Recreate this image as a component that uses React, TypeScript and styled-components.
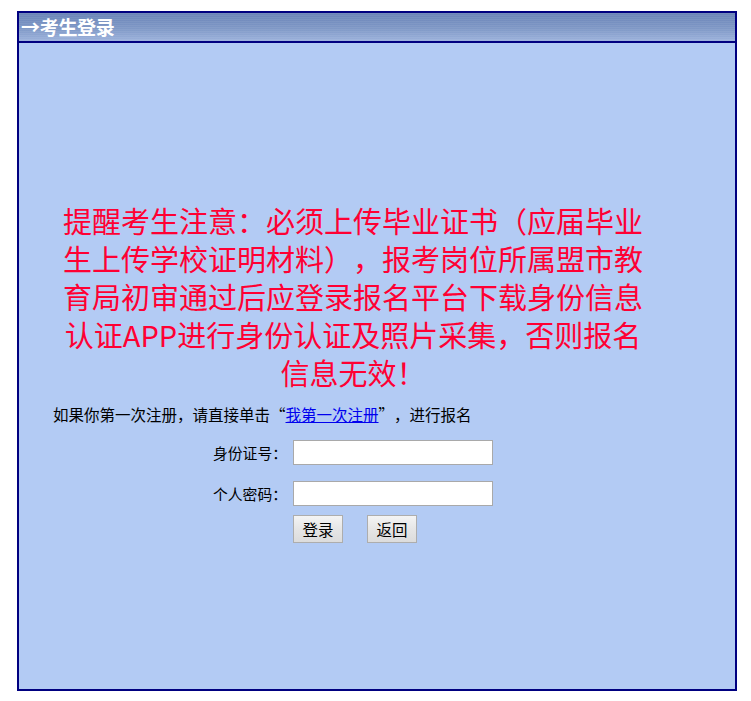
import React from 'react';
import styled, { createGlobalStyle } from 'styled-components';

const GlobalStyle = createGlobalStyle`
  body {
    margin: 0;
    background: #fff;
    font-family: "Noto Sans CJK SC", "Noto Sans", sans-serif;
    text-spacing-trim: space-all;
  }
`;

const Page = styled.div`
  padding: 11px 0 0 17px;
`;

const Panel = styled.div`
  display: flex;
  flex-direction: column;
  width: 716px;
  height: 676px;
  border: 2px solid #000080;
  background: #b3cbf4;
`;

const Header = styled.div`
  display: flex;
  align-items: center;
  height: 28px;
  padding: 0 2px;
  border-bottom: 2px solid #000080;
  background:
    repeating-linear-gradient(180deg, rgba(255, 255, 255, 0.06) 0 1px, rgba(0, 0, 0, 0) 1px 2px),
    linear-gradient(180deg, #6a84b7 0%, #7f98c6 55%, #9cb2dc 100%);
  color: #fff;
  font-size: 19px;
  font-weight: 700;
  line-height: 28px;
  letter-spacing: -0.3px;
`;

const Body = styled.div`
  flex: 1;
  padding: 158px 0 0;
`;

const Notice = styled.p`
  width: 600px;
  margin: 0 0 0 34px;
  color: #ff0033;
  font-size: 29px;
  line-height: 38px;
  text-align: center;
`;

const Hint = styled.p`
  margin: 13px 0 0 34px;
  color: #000;
  font-size: 15.5px;
  line-height: 20px;
  font-feature-settings: "fwid";
`;

const Link = styled.a`
  color: #0000ee;
  text-decoration: underline;
`;

const Form = styled.div`
  display: grid;
  grid-template-columns: 268px 200px;
  column-gap: 6px;
  row-gap: 16px;
  margin-top: 16px;
`;

const Label = styled.label`
  color: #000;
  font-size: 14.8px;
  line-height: 25px;
  text-align: right;
`;

const Input = styled.input`
  box-sizing: border-box;
  width: 200px;
  height: 25px;
  margin: 0;
  border: 1px solid #a9a9a9;
  background: #fff;
`;

const Actions = styled.div`
  grid-column: 2;
  display: flex;
  gap: 24px;
  margin-top: -7px;
`;

const Button = styled.button`
  box-sizing: border-box;
  width: 50px;
  height: 28px;
  padding: 0;
  border: 1px solid #adadad;
  border-radius: 0;
  background: linear-gradient(180deg, #f4f4f4 0%, #e6e6e6 50%, #dcdcdc 100%);
  color: #000;
  font-family: "Noto Sans CJK SC", sans-serif;
  font-size: 15.5px;
  line-height: 26px;
`;

export default function App() {
  return (
    <div lang="zh-CN">
      <GlobalStyle />
      <Page>
        <Panel>
          <Header>→考生登录</Header>
          <Body>
            <Notice>
              提醒考生注意：必须上传毕业证书（应届毕业生上传学校证明材料），报考岗位所属盟市教育局初审通过后应登录报名平台下载身份信息认证APP进行身份认证及照片采集，否则报名信息无效！
            </Notice>
            <Hint>
              如果你第一次注册，请直接单击“<Link href="#">我第一次注册</Link>”，进行报名
            </Hint>
            <Form>
              <Label htmlFor="idcard">身份证号：</Label>
              <Input id="idcard" type="text" />
              <Label htmlFor="pwd">个人密码：</Label>
              <Input id="pwd" type="password" />
              <Actions>
                <Button type="button">登录</Button>
                <Button type="button">返回</Button>
              </Actions>
            </Form>
          </Body>
        </Panel>
      </Page>
    </div>
  );
}
